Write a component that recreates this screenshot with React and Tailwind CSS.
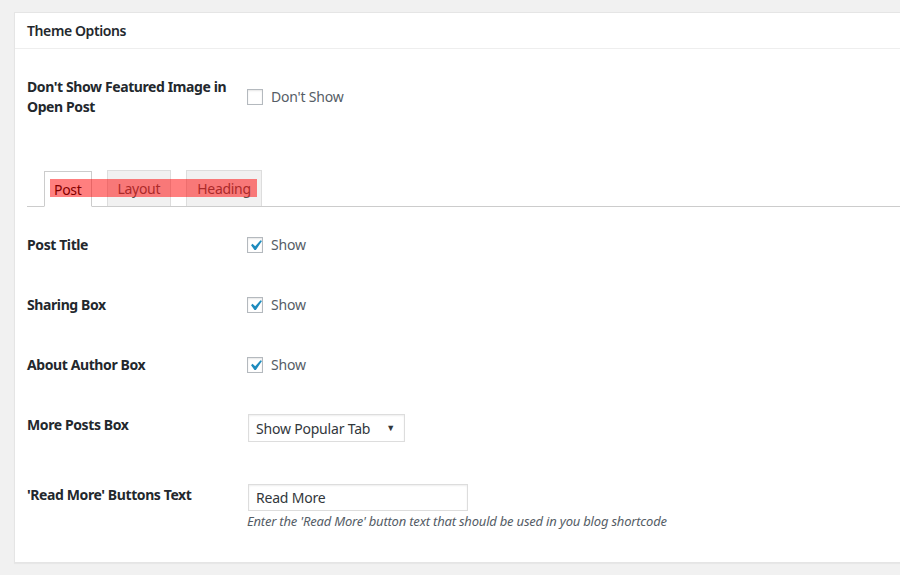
import React from 'react';

const font = { fontFamily: '"Noto Sans", "Open Sans", sans-serif' };

const CheckIcon = () => (
  <svg viewBox="0 0 20 20" className="absolute -left-[3px] -top-[3px] w-[21px] h-[21px]">
    <path d="M14.83 4.89l1.34.94-5.81 8.38H9.02L5.78 9.67l1.34-1.25 2.57 2.4z" fill="#1e8cbe" />
  </svg>
);

const Checkbox = ({ checked, label }) => (
  <label className="flex items-center gap-2 text-[14px] tracking-[-0.2px] text-[#555d66]">
    <span className="relative w-4 h-4 bg-white border border-[#b4b9be] shadow-[inset_0_1px_2px_rgba(0,0,0,0.1)]">
      {checked && <CheckIcon />}
    </span>
    {label}
  </label>
);

const Row = ({ label, children, h = 'h-[60px]' }) => (
  <div className={`flex ${h}`}>
    <div className="w-[220px] shrink-0 text-[14px] leading-[20px] font-bold tracking-[-0.4px] text-[#23282d]">{label}</div>
    <div className="flex-1">{children}</div>
  </div>
);

export default function App() {
  return (
    <div style={font} className="w-[900px] h-[575px] overflow-hidden bg-[#f1f1f1] pt-[12px] pl-[14px]">
      <div className="w-[1000px] h-[551px] bg-white border border-[#e5e5e5] shadow-[0_1px_1px_rgba(0,0,0,0.04)]">
        <div className="h-[36px] border-b border-[#eeeeee] px-[12px] flex items-center">
          <h2 className="text-[14px] font-semibold tracking-[-0.4px] text-[#23282d]">Theme Options</h2>
        </div>

        <div className="px-[12px]">
          <div className="flex pt-[28px] h-[122px]">
            <div className="w-[220px] shrink-0 text-[14px] leading-[20px] font-bold tracking-[-0.4px] text-[#23282d]">
              Don't Show Featured Image in Open Post
            </div>
            <div className="pt-[9px]">
              <Checkbox label="Don't Show" />
            </div>
          </div>

          <div className="relative flex items-end gap-[15px] pl-[17px] border-b border-[#cccccc] h-[36px] text-[14px] tracking-[-0.3px]">
            <div className="h-[36px] px-[9px] flex items-center bg-white border border-[#cccccc] border-b-white -mb-px text-[#000]">Post</div>
            <div className="h-[36px] px-[10px] flex items-center bg-[#f1f1f1] border border-[#dddddd] border-b-0 text-[#555]">Layout</div>
            <div className="h-[36px] px-[10px] flex items-center bg-[#f1f1f1] border border-[#dddddd] border-b-0 text-[#555]">Heading</div>
            <div className="absolute left-[23px] top-[8px] w-[207px] h-[18px] bg-[rgba(255,0,0,0.5)]" />
          </div>

          <div className="pt-[28px]">
            <Row label="Post Title"><div className="-mt-px"><Checkbox checked label="Show" /></div></Row>
            <Row label="Sharing Box"><div className="-mt-px"><Checkbox checked label="Show" /></div></Row>
            <Row label="About Author Box"><div className="-mt-px"><Checkbox checked label="Show" /></div></Row>
            <Row label="More Posts Box" h="h-[70px]">
              <div className="-mt-[1px] ml-px w-[157px] h-[28px] border border-[#dddddd] bg-white flex items-center justify-between pl-[7px] pr-[9px] text-[14px] tracking-[-0.2px] text-[#32373c] shadow-[inset_0_1px_2px_rgba(0,0,0,0.07)]">
                <span>Show Popular Tab</span>
                <span className="text-[9px]">▼</span>
              </div>
            </Row>
            <Row label="'Read More' Buttons Text">
              <div className="-mt-[1px] ml-px w-[220px] h-[27px] border border-[#dddddd] bg-white flex items-center pl-[7px] text-[14px] tracking-[-0.2px] text-[#32373c] shadow-[inset_0_1px_2px_rgba(0,0,0,0.07)]">
                Read More
              </div>
              <p className="mt-[1px] text-[13px] italic tracking-[-0.2px] text-[#555d66]">
                Enter the 'Read More' button text that should be used in you blog shortcode
              </p>
            </Row>
          </div>
        </div>
      </div>
    </div>
  );
}
